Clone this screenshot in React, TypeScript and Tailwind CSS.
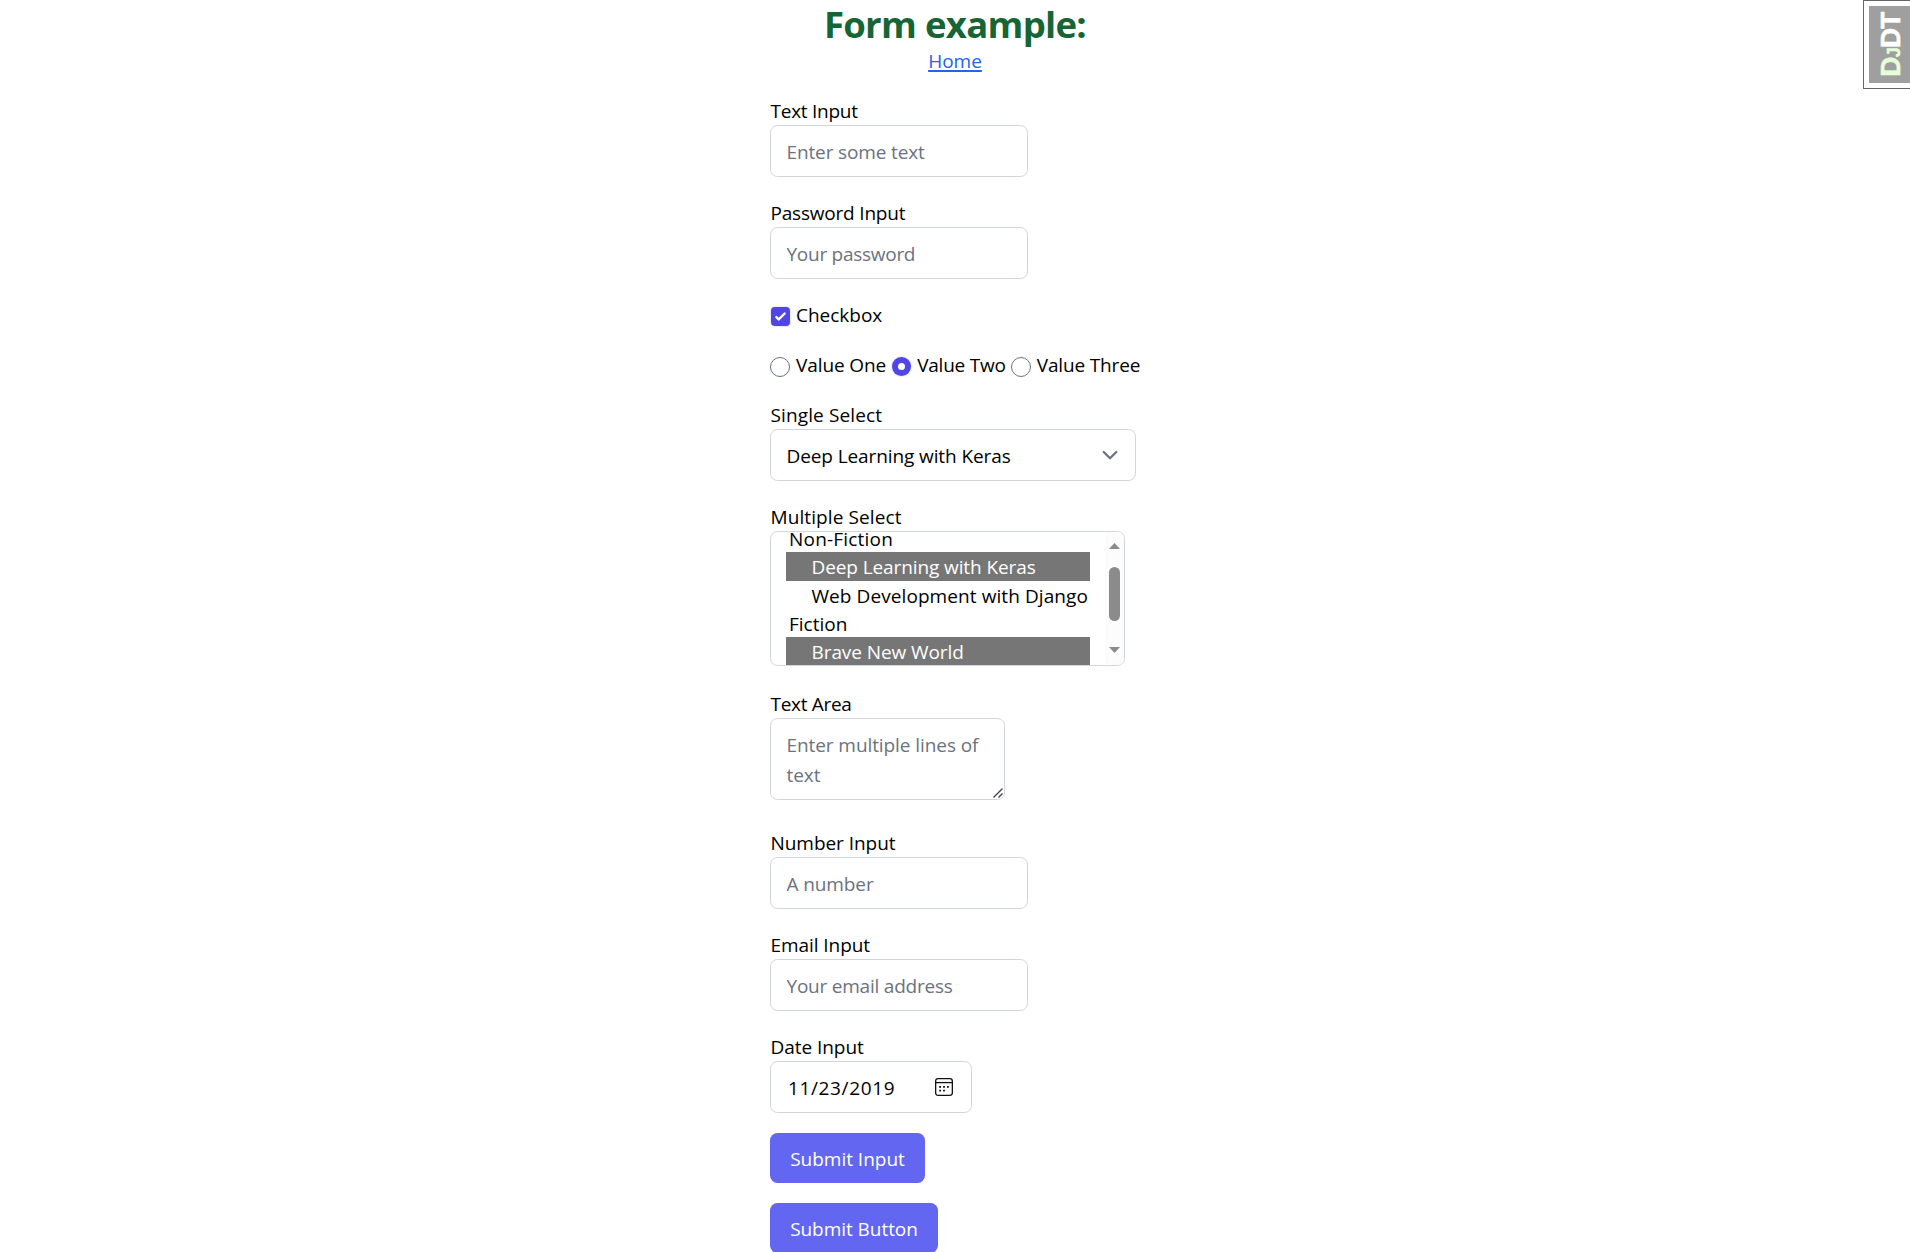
import React from "react";

const control =
  "block h-[52px] rounded-[7.5px] border border-gray-300 bg-white pl-[15.5px] pr-[16px] text-black placeholder:text-[#6b7280] placeholder:opacity-100 outline-none";

function Field({ label, track, children }: { label: string; track: string; children: React.ReactNode }) {
  return (
    <div className="mb-5">
      <div className={`h-[30px] pl-[0.5px] leading-[32px] ${track}`}>{label}</div>
      {children}
    </div>
  );
}

function Radio({ label, checked, track }: { label: string; checked?: boolean; track: string }) {
  return (
    <label className="flex h-[30px] items-start">
      <span
        className={
          checked
            ? "mt-[8px] mr-[0.5px] ml-[0.5px] flex size-[19px] items-center justify-center rounded-full bg-[#4f46e5] shadow-[0_0_2px_#4f46e560]"
            : "mt-[8px] size-5 rounded-full border border-[#6b7280] bg-white"
        }
      >
        {checked && <span className="size-[7px] rounded-full bg-white" />}
      </span>
      <span className={`ml-[6px] leading-[32px] ${track}`}>{label}</span>
    </label>
  );
}

const options = [
  { text: "Non-Fiction", cls: "h-[20px] leading-[15px] pl-[3px] text-black tracking-[0.2px]" },
  { text: "Deep Learning with Keras", cls: "h-[29px] leading-[31px] bg-[#767676] pl-[25.5px] text-white tracking-[-0.1px]" },
  { text: "Web Development with Django", cls: "h-[28px] leading-[31px] pl-[25.5px] text-black tracking-[0.08px]" },
  { text: "Fiction", cls: "h-[28px] leading-[31px] pl-[3px] text-black" },
  { text: "Brave New World", cls: "h-[28px] leading-[31px] bg-[#767676] pl-[25.5px] text-white tracking-[-0.08px]" },
];

export default function App() {
  return (
    <div className="relative h-[1252px] overflow-hidden bg-white font-['Open_Sans',sans-serif] text-[19px] leading-[30px] text-black">
      <header className="flex flex-col items-center">
        <h1 className="h-[45px] text-[36.5px] leading-[49px] font-bold tracking-[-0.7px] text-[#166534]">Form example:</h1>
        <a className="h-[30px] leading-[32px] text-[#2563eb] underline decoration-[1.5px] underline-offset-[2px]">Home</a>
      </header>
      <form className="mt-5 ml-[770px] flex flex-col items-start">
        <Field label="Text Input" track="tracking-[-0.25px]">
          <input className={`${control} w-[258px] pt-[2px] tracking-[-0.13px]`} placeholder="Enter some text" />
        </Field>
        <Field label="Password Input" track="tracking-[-0.2px]">
          <input type="password" className={`${control} w-[258px] pt-[2px] tracking-[-0.27px]`} placeholder="Your password" />
        </Field>
        <label className="mb-5 flex h-[30px] items-start">
          <span className="mt-[8px] mr-[0.5px] ml-[0.5px] flex size-[19px] items-center justify-center rounded-[4px] bg-[#4f46e5] shadow-[0_0_2px_#4f46e560]">
            <svg viewBox="0 0 16 16" className="size-[19px]" fill="#fff">
              <path d="M12.207 4.793a1 1 0 010 1.414l-5 5a1 1 0 01-1.414 0l-2-2a1 1 0 011.414-1.414L6.5 9.086l4.293-4.293a1 1 0 011.414 0z" />
            </svg>
          </span>
          <span className="ml-[6px] leading-[32px] tracking-[-0.02px]">Checkbox</span>
        </label>
        <div className="mb-5 flex h-[30px] gap-[5px]">
          <Radio label="Value One" track="tracking-[-0.1px]" />
          <Radio label="Value Two" checked track="tracking-[-0.22px]" />
          <Radio label="Value Three" track="tracking-[-0.15px]" />
        </div>
        <Field label="Single Select" track="tracking-[0.12px]">
          <div className={`${control} flex w-[366px] items-center justify-between`}>
            <span className="pt-[2px] tracking-[-0.1px]">Deep Learning with Keras</span>
            <svg viewBox="0 0 20 20" className="-mr-[6px] size-[30px]" fill="none" stroke="#6b7280" strokeWidth="1.5" strokeLinecap="round" strokeLinejoin="round">
              <path d="M5.8 8l4.2 4.2L14.2 8" />
            </svg>
          </div>
        </Field>
        <Field label="Multiple Select" track="tracking-[0.1px]">
          <div className="flex h-[135px] w-[355px] overflow-hidden rounded-[7.5px] border border-gray-300 pl-[15px]">
            <div className="h-[133px] w-[304px] shrink-0 overflow-hidden">
              {options.map((o) => (
                <div key={o.text} className={`whitespace-nowrap ${o.cls}`}>
                  {o.text}
                </div>
              ))}
            </div>
            <div className="ml-[15px] flex w-[19px] flex-col items-center bg-[#fcfcfc] pt-[11px]">
              <svg viewBox="0 0 11 6" className="h-[6px] w-[11px]" fill="#8b8b8b">
                <path d="M5.5 0L11 6H0z" />
              </svg>
              <div className="mt-[18px] h-[54px] w-[11px] rounded-full bg-[#8b8b8b]" />
              <svg viewBox="0 0 11 6" className="mt-[26px] h-[6px] w-[11px]" fill="#8b8b8b">
                <path d="M0 0h11L5.5 6z" />
              </svg>
            </div>
          </div>
        </Field>
        <Field label="Text Area" track="pt-[2px] tracking-[-0.3px]">
          <div className="relative mt-[2px] mb-[27px]">
            <textarea
              className="block h-[82px] w-[235px] resize-none overflow-hidden rounded-[7.5px] border border-gray-300 pt-[11px] pr-[16px] pb-[8px] pl-[15.5px] leading-[30px] tracking-[-0.08px] outline-none placeholder:text-[#6b7280] placeholder:opacity-100"
              placeholder="Enter multiple lines of text"
            />
            <svg viewBox="0 0 10 10" className="absolute right-[2px] bottom-[2px] size-[10px]" stroke="#444" strokeWidth="1.4" fill="none">
              <path d="M.5 9.5l9-9M5.5 9.5l4-4" />
            </svg>
          </div>
        </Field>
        <div className="-mt-5">
          <Field label="Number Input" track="tracking-[-0.05px]">
            <input className={`${control} w-[258px] pt-[2px] tracking-[-0.1px]`} placeholder="A number" />
          </Field>
        </div>
        <Field label="Email Input" track="tracking-[-0.07px]">
          <input type="email" className={`${control} w-[258px] pt-[2px] tracking-[-0.22px]`} placeholder="Your email address" />
        </Field>
        <Field label="Date Input" track="tracking-[-0.05px]">
          <div className={`${control} flex w-[202px] items-center justify-between`}>
            <span className="pt-[2px] pl-[1.5px] tracking-[0.64px]">11/23/2019</span>
            <svg viewBox="0 0 18 18" className="mr-[2px] mb-px size-[18px]" fill="none" stroke="#111" strokeWidth="1.3">
              <rect x=".65" y=".65" width="16.7" height="16.7" rx="2.5" />
              <path d="M.6 4.6h16.8" />
              <path d="M4.2 8.9h1.8M8.1 8.9h1.8M12 8.9h1.8M4.2 12.7h1.8M8.1 12.7h1.8" strokeWidth="1.8" />
            </svg>
          </div>
        </Field>
        <button className="mb-5 h-[50px] w-[155px] rounded-[7.5px] bg-[#6366f1] pt-[2px] tracking-[-0.02px] text-white">Submit Input</button>
        <button className="h-[50px] w-[168px] rounded-[7.5px] bg-[#6366f1] pt-[2px] tracking-[-0.05px] text-white">Submit Button</button>
      </form>
      <aside className="absolute top-0 right-0 h-[89px] w-[47px] border border-r-0 border-[#666] bg-white py-[5px] pl-[5px]">
        <div className="flex h-[77px] items-center justify-center bg-[#9f9f9f]">
          <div className="shrink-0 -rotate-90 pt-[6px] font-['Liberation_Sans',sans-serif] text-[28px] leading-[38px] font-bold tracking-[-0.8px] whitespace-nowrap [-webkit-text-stroke:0.5px_currentColor]">
            <span className="text-[#e6ffd8]">D</span>
            <span className="text-[18px] text-[#e6ffd8]">J</span>
            <span className="text-white">DT</span>
          </div>
        </div>
      </aside>
    </div>
  );
}
